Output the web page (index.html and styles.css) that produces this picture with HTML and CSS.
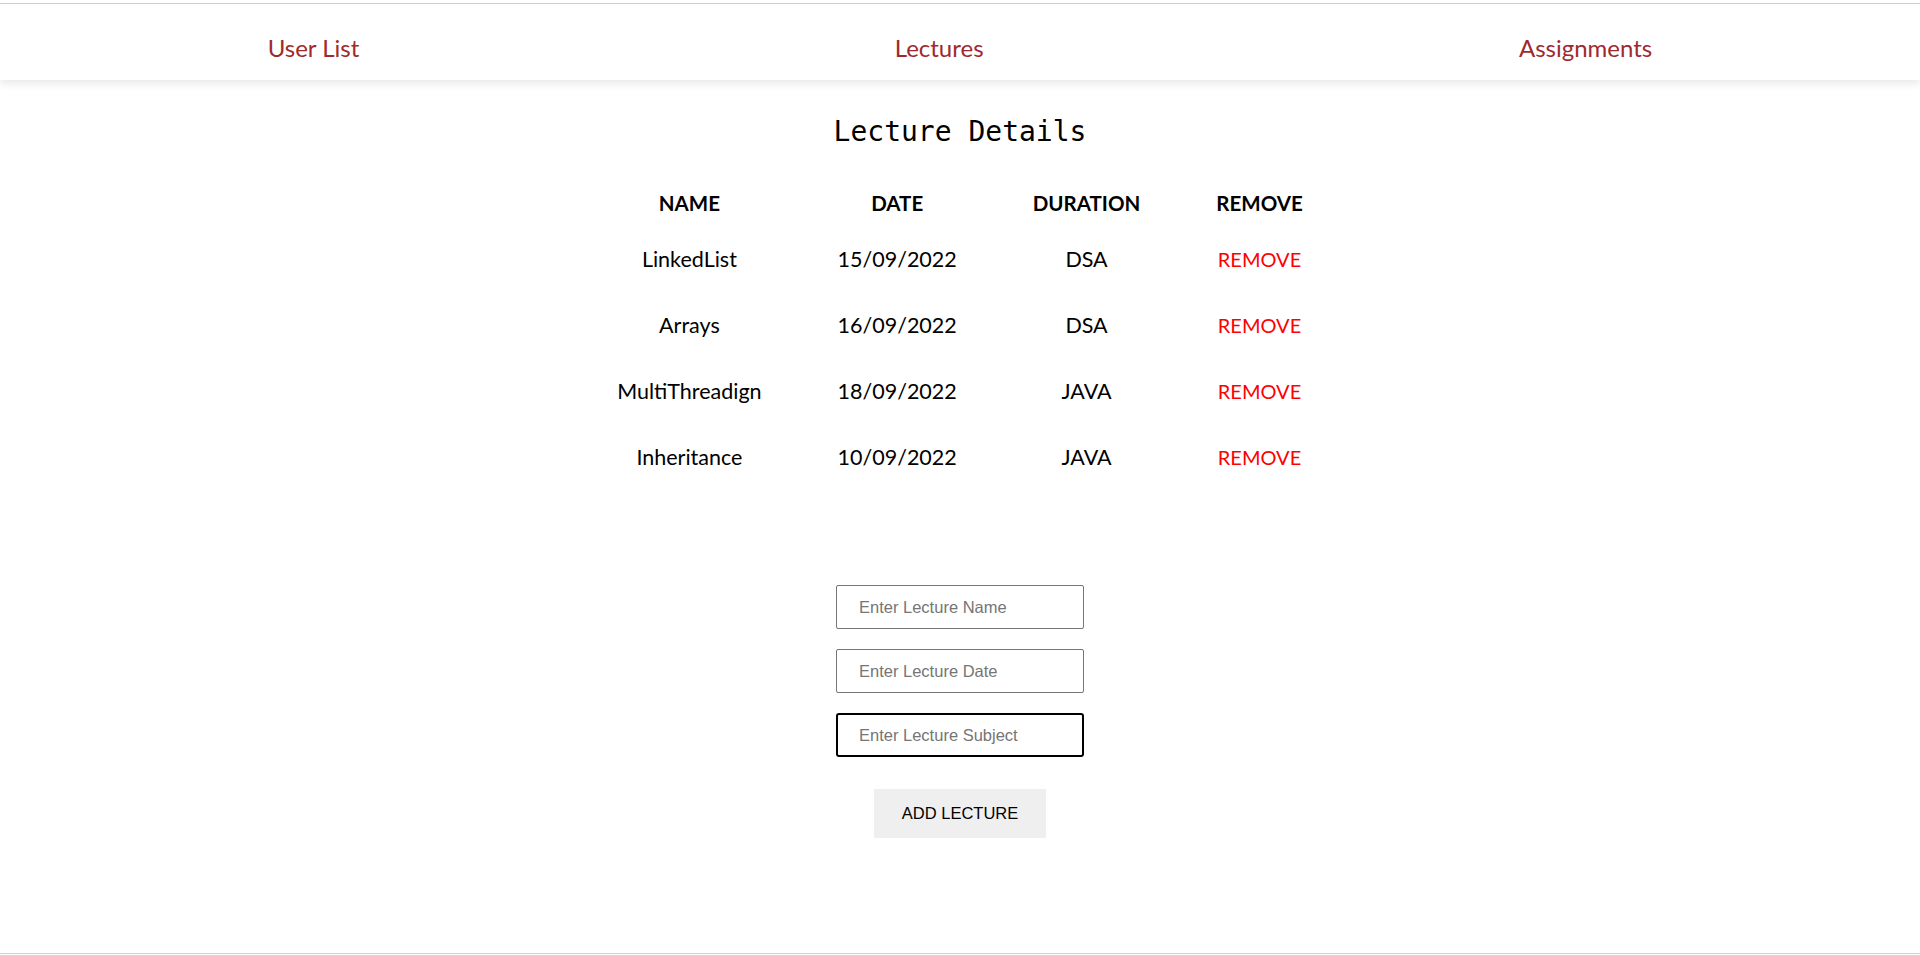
FILE: index.html
```html
<!DOCTYPE html>
<html lang="en">
<head>
<meta charset="utf-8">
<title>Lecture Details</title>
<link rel="stylesheet" href="styles.css">
</head>
<body>
<div class="frame">
  <nav class="nav">
    <a class="nav-link" href="#">User List</a>
    <a class="nav-link" href="#">Lectures</a>
    <a class="nav-link" href="#">Assignments</a>
  </nav>
  <main class="content">
    <h2 class="title">Lecture Details</h2>
    <table class="lectures">
      <thead>
        <tr><th>NAME</th><th>DATE</th><th>DURATION</th><th>REMOVE</th></tr>
      </thead>
      <tbody>
        <tr><td>LinkedList</td><td>15/09/2022</td><td>DSA</td><td class="remove">REMOVE</td></tr>
        <tr><td>Arrays</td><td>16/09/2022</td><td>DSA</td><td class="remove">REMOVE</td></tr>
        <tr><td>MultiThreadign</td><td>18/09/2022</td><td>JAVA</td><td class="remove">REMOVE</td></tr>
        <tr><td>Inheritance</td><td>10/09/2022</td><td>JAVA</td><td class="remove">REMOVE</td></tr>
      </tbody>
    </table>
    <form class="add-form">
      <input class="field" type="text" placeholder="Enter Lecture Name">
      <input class="field" type="text" placeholder="Enter Lecture Date">
      <input class="field field-focused" type="text" placeholder="Enter Lecture Subject">
      <button class="add-btn" type="button">ADD LECTURE</button>
    </form>
  </main>
</div>
</body>
</html>
```
FILE: styles.css
```css
html, body {
  margin: 0;
  padding: 0;
  background: #fff;
}

body {
  padding-top: 3px;
  font-family: Lato, "Open Sans", sans-serif;
  color: #000;
}

.frame {
  height: 951px;
  box-sizing: border-box;
  border-top: 1px solid #d0d0d0;
  border-bottom: 1px solid #d0d0d0;
}

.nav {
  height: 76px;
  box-sizing: border-box;
  padding-top: 11px;
  display: flex;
  justify-content: space-around;
  align-items: center;
  background: #fff;
  box-shadow: 0 4px 8px rgba(0, 0, 0, 0.09);
}

.nav-link {
  font-family: Lato, sans-serif;
  font-size: 24px;
  line-height: 29px;
  color: #9e2a2e;
  text-decoration: none;
}

.content {
  display: flex;
  flex-direction: column;
  align-items: center;
}

.title {
  margin: 35px 0 32px;
  font-family: "DejaVu Sans Mono", "Liberation Mono", monospace;
  font-size: 28px;
  font-weight: normal;
  line-height: 33px;
}

.lectures {
  border-collapse: collapse;
  border-spacing: 0;
  font-family: Lato, sans-serif;
}

.lectures th {
  padding: 11px 38px;
  font-size: 20.5px;
  line-height: 24px;
  font-weight: bold;
  text-align: center;
}

.lectures td {
  padding: 21px 38px;
  font-size: 21.5px;
  line-height: 24px;
  text-align: center;
}

.lectures .remove {
  color: #f00;
  font-size: 20px;
}

.add-form {
  margin-top: 95px;
  display: flex;
  flex-direction: column;
  align-items: center;
  gap: 20px;
}

.field {
  width: 248px;
  height: 44px;
  box-sizing: border-box;
  padding: 0 22px;
  border: 1px solid #767676;
  border-radius: 2px;
  font-family: "Liberation Sans", Arial, sans-serif;
  font-size: 16.5px;
  color: #000;
  outline: none;
}

.field::placeholder {
  color: #757575;
}

.field-focused {
  border: 2px solid #000;
  border-radius: 3px;
  padding: 0 21px;
}

.add-btn {
  margin-top: 12px;
  width: 172px;
  height: 49px;
  border: none;
  border-radius: 0;
  background: #efefef;
  font-family: "Liberation Sans", Arial, sans-serif;
  font-size: 16.5px;
  color: #000;
}
```
